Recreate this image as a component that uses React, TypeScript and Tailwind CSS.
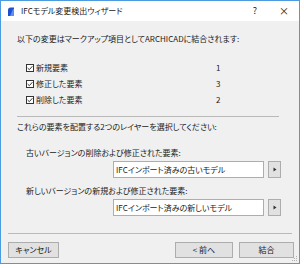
import React from "react";

const font = {
  fontFamily: '"Noto Sans CJK JP", "Noto Sans", sans-serif',
};

function Check() {
  return (
    <div className="w-[8px] h-[8px] border border-[#333] bg-white flex items-center justify-center">
      <svg width="6" height="6" viewBox="0 0 6 6">
        <path d="M0.6 3 L2.3 4.7 L5.4 1.2" fill="none" stroke="#222" strokeWidth="0.9" />
      </svg>
    </div>
  );
}

function Row({ label, n }: { label: string; n: string }) {
  return (
    <div className="h-[16px] flex items-center ml-[9px]">
      <Check />
      <div className="ml-[2px] w-[180px]">{label}</div>
      <div>{n}</div>
    </div>
  );
}

function LayerRow({ value }: { value: string }) {
  return (
    <div className="flex mt-[2px] h-[17px]">
      <div className="ml-[96px] w-[151px] h-[17px] bg-white border border-[#adadad] flex items-center pl-[2px]">
        {value}
      </div>
      <div className="ml-[4px] w-[13px] h-[17px] bg-[#e1e1e1] border border-[#adadad] flex items-center justify-center">
        <svg width="4" height="5" viewBox="0 0 4 5">
          <path d="M0.5 0.5 L3.5 2.5 L0.5 4.5 Z" fill="#333" />
        </svg>
      </div>
    </div>
  );
}

export default function App() {
  return (
    <div className="w-[304px] h-[268px] bg-white">
      <div
        className="w-[300px] h-[264px] border border-[#4c9be0] bg-[#f0f0f0] flex flex-col text-[8px] leading-[12px] text-[#1a1a1a] [font-feature-settings:'palt']"
        style={font}
      >
        <div className="h-[20px] bg-white flex items-center relative">
          <svg className="ml-[6px]" width="8" height="9" viewBox="0 0 8 9">
            <path d="M1 9 L1 3 Q1 0.5 3.5 0.5 L7 0.5 L7 9 Z" fill="#1f4fd0" />
            <path d="M3 9 L6 2 L7 2 L7 9 Z" fill="#5c8ff0" />
          </svg>
          <div className="ml-[6px]">IFCモデル変更検出ウィザード</div>
          <div className="ml-auto w-[12px] text-center text-[9px]">?</div>
          <div className="ml-[17px] mr-[9px] w-[12px] text-center text-[10px]">×</div>
        </div>
        <div className="pl-[16px] flex flex-col relative flex-1">
          <div className="mt-[12px]">以下の変更はマークアップ項目としてARCHICADに結合されます:</div>
          <div className="mt-[15px]">
            <Row label="新規要素" n="1" />
            <Row label="修正した要素" n="3" />
            <Row label="削除した要素" n="2" />
          </div>
          <div className="mt-[8px] w-[262px] h-px bg-[#b9b9b9]" />
          <div className="mt-[4px]">これらの要素を配置する2つのレイヤーを選択してください:</div>
          <div className="mt-[14px] ml-[9px]">古いバージョンの削除および修正された要素:</div>
          <LayerRow value="IFCインポート済みの古いモデル" />
          <div className="mt-[7px] ml-[9px]">新しいバージョンの新規および修正された要素:</div>
          <LayerRow value="IFCインポート済みの新しいモデル" />
          <div className="mt-[17px] -ml-[9px] w-[284px] h-px bg-[#b9b9b9]" />
          <div className="mt-[8px] -ml-[9px] flex h-[16px]">
            <div className="w-[51px] bg-[#e1e1e1] border border-[#adadad] flex items-center justify-center">キャンセル</div>
            <div className="ml-[116px] w-[58px] bg-[#e1e1e1] border border-[#adadad] flex items-center justify-center">&lt; 前へ</div>
            <div className="ml-[6px] w-[55px] bg-[#e1e1e1] border border-[#adadad] flex items-center justify-center">結合</div>
          </div>
          <svg className="absolute right-[1px] bottom-[1px]" width="6" height="6" viewBox="0 0 6 6">
            <rect x="4" y="0" width="1" height="1" fill="#b0b0b0" />
            <rect x="2" y="2" width="1" height="1" fill="#b0b0b0" />
            <rect x="4" y="2" width="1" height="1" fill="#b0b0b0" />
            <rect x="0" y="4" width="1" height="1" fill="#b0b0b0" />
            <rect x="2" y="4" width="1" height="1" fill="#b0b0b0" />
            <rect x="4" y="4" width="1" height="1" fill="#b0b0b0" />
          </svg>
        </div>
      </div>
    </div>
  );
}
